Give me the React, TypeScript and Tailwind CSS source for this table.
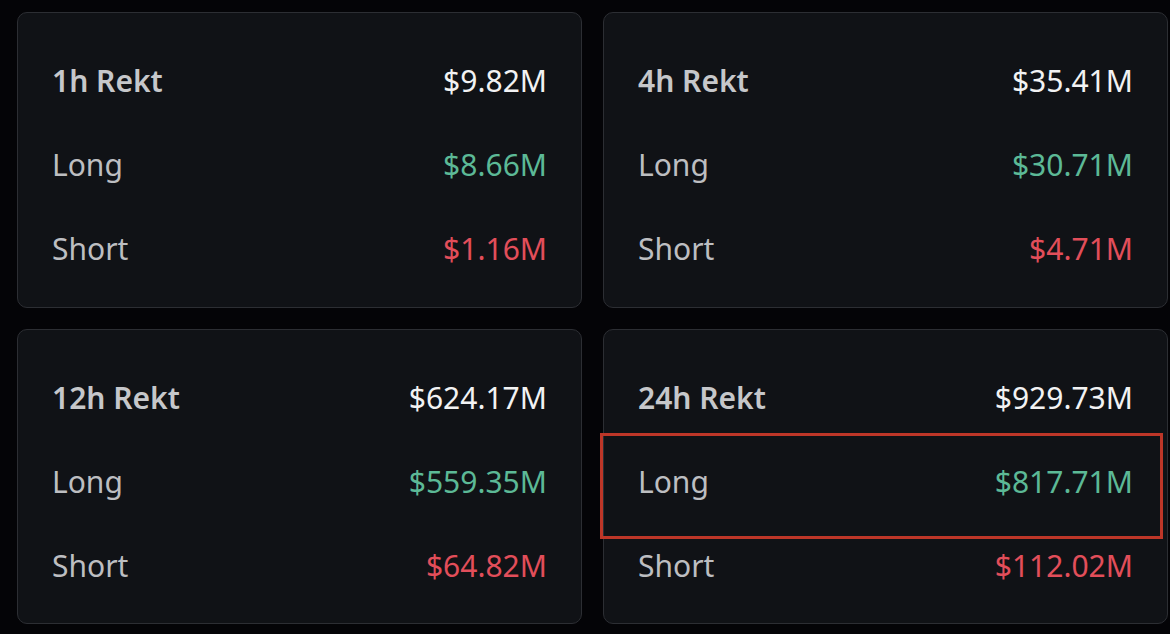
import React from "react";

type Card = { title: string; total: string; long: string; short: string; highlight?: boolean };

const cards: Card[] = [
  { title: "1h Rekt", total: "$9.82M", long: "$8.66M", short: "$1.16M" },
  { title: "4h Rekt", total: "$35.41M", long: "$30.71M", short: "$4.71M" },
  { title: "12h Rekt", total: "$624.17M", long: "$559.35M", short: "$64.82M" },
  { title: "24h Rekt", total: "$929.73M", long: "$817.71M", short: "$112.02M", highlight: true },
];

function RektCard({ c, h }: { c: Card; h: string }) {
  return (
    <div className={`relative ${h} rounded-[10px] border border-[#2c2e33] bg-[#101216] px-[34px] pt-[26px]`}>
      <div className="flex h-[84px] items-center justify-between">
        <span className="font-semibold text-[#c6c7ca]">{c.title}</span>
        <span className="text-[#f2f2f3]">{c.total}</span>
      </div>
      <div className="flex h-[84px] items-center justify-between">
        <span className="text-[#bdbec1]">Long</span>
        <span className="text-[#5cb996]">{c.long}</span>
      </div>
      <div className="flex h-[84px] items-center justify-between">
        <span className="text-[#bdbec1]">Short</span>
        <span className="text-[#e24e5a]">{c.short}</span>
      </div>
      {c.highlight && (
        <div className="pointer-events-none absolute left-[-4px] top-[103px] h-[106px] w-[563px] border-[3px] border-[#bd3628]" />
      )}
    </div>
  );
}

export default function App() {
  return (
    <div
      className="h-[634px] w-[1170px] bg-[#040407] pl-[17px] pr-[2px] pt-[12px] text-[30px] leading-none"
      style={{ fontFamily: '"Noto Sans", "Open Sans", sans-serif' }}
    >
      <div className="grid grid-cols-2 gap-x-[21px] gap-y-[21px]">
        {cards.map((c, i) => (
          <RektCard key={c.title} c={c} h={i < 2 ? "h-[296px]" : "h-[295px]"} />
        ))}
      </div>
    </div>
  );
}
